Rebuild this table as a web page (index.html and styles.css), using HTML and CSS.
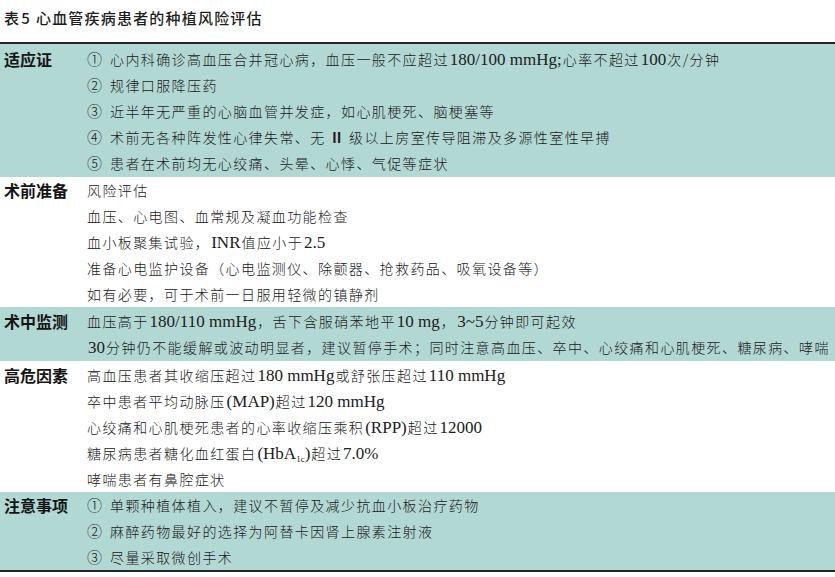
FILE: index.html
```html
<!DOCTYPE html>
<html lang="zh-CN">
<head>
<meta charset="utf-8">
<title>表5 心血管疾病患者的种植风险评估</title>
<link rel="stylesheet" href="styles.css">
</head>
<body>
<div class="page">
  <div class="caption">表<span class="cap-num">5</span>心血管疾病患者的种植风险评估</div>
  <div class="table">
    <div class="sec sec--tint sec--first">
      <div class="label">适应证</div>
      <div class="lines">
        <div class="line"><span class="mark">①</span>心内科确诊高血压合并冠心病，血压一般不应超过<span class="num">180/100 mmHg;</span>心率不超过<span class="num">100</span>次/分钟</div>
        <div class="line"><span class="mark">②</span>规律口服降压药</div>
        <div class="line"><span class="mark">③</span>近半年无严重的心脑血管并发症，如心肌梗死、脑梗塞等</div>
        <div class="line"><span class="mark">④</span>术前无各种阵发性心律失常、无<span class="roman">Ⅱ</span>级以上房室传导阻滞及多源性室性早搏</div>
        <div class="line"><span class="mark">⑤</span>患者在术前均无心绞痛、头晕、心悸、气促等症状</div>
      </div>
    </div>
    <div class="sec">
      <div class="label">术前准备</div>
      <div class="lines">
        <div class="line">风险评估</div>
        <div class="line">血压、心电图、血常规及凝血功能检查</div>
        <div class="line">血小板聚集试验，<span class="num">INR</span>值应小于<span class="num">2.5</span></div>
        <div class="line">准备心电监护设备（心电监测仪、除颤器、抢救药品、吸氧设备等）</div>
        <div class="line">如有必要，可于术前一日服用轻微的镇静剂</div>
      </div>
    </div>
    <div class="sec sec--tint sec--pad">
      <div class="label">术中监测</div>
      <div class="lines">
        <div class="line">血压高于<span class="num">180/110 mmHg</span>，舌下含服硝苯地平<span class="num">10 mg</span>，<span class="num">3~5</span>分钟即可起效</div>
        <div class="line"><span class="num">30</span>分钟仍不能缓解或波动明显者，建议暂停手术；同时注意高血压、卒中、心绞痛和心肌梗死、糖尿病、哮喘</div>
      </div>
    </div>
    <div class="sec sec--top">
      <div class="label">高危因素</div>
      <div class="lines">
        <div class="line">高血压患者其收缩压超过<span class="num">180 mmHg</span>或舒张压超过<span class="num">110 mmHg</span></div>
        <div class="line">卒中患者平均动脉压<span class="num">(MAP)</span>超过<span class="num">120 mmHg</span></div>
        <div class="line">心绞痛和心肌梗死患者的心率收缩压乘积<span class="num">(RPP)</span>超过<span class="num">12000</span></div>
        <div class="line">糖尿病患者糖化血红蛋白<span class="num">(HbA<sub class="sub">1c</sub>)</span>超过<span class="num">7.0%</span></div>
        <div class="line">哮喘患者有鼻腔症状</div>
      </div>
    </div>
    <div class="sec sec--tint">
      <div class="label">注意事项</div>
      <div class="lines">
        <div class="line"><span class="mark">①</span>单颗种植体植入，建议不暂停及减少抗血小板治疗药物</div>
        <div class="line"><span class="mark">②</span>麻醉药物最好的选择为阿替卡因肾上腺素注射液</div>
        <div class="line"><span class="mark">③</span>尽量采取微创手术</div>
      </div>
    </div>
  </div>
</div>
</body>
</html>
```

FILE: styles.css
```css
html, body {
  margin: 0;
  padding: 0;
  background: #ffffff;
}

.page {
  width: 835px;
  height: 577px;
  overflow: hidden;
}

.caption {
  height: 42px;
  box-sizing: border-box;
  padding: 8px 0 0 4px;
  font-family: "Noto Sans CJK SC", sans-serif;
  font-size: 15px;
  font-weight: 500;
  letter-spacing: 1.2px;
  line-height: 20px;
  color: #1e1e1e;
}

.cap-num {
  margin: 0 5px 0 1px;
}

.table {
  border-top: 2px solid #262626;
  border-bottom: 2px solid #262626;
}

.sec {
  display: grid;
  grid-template-columns: 87px 1fr;
  align-items: start;
}

.sec--tint {
  background: #b2d8d3;
}

.sec--first {
  padding: 2px 0 1px;
}

.sec--pad {
  padding: 1px 0 1px;
}

.sec--top {
  padding-top: 1px;
}

.label {
  padding-left: 4px;
  font-family: "Noto Sans CJK SC", sans-serif;
  font-size: 16px;
  font-weight: 700;
  line-height: 26px;
  color: #151515;
}

.lines {
  display: flex;
  flex-direction: column;
}

.line {
  font-family: "Noto Sans CJK SC", sans-serif;
  font-size: 14px;
  font-weight: 300;
  letter-spacing: 1.4px;
  line-height: 26px;
  height: 26px;
  color: #202020;
  white-space: nowrap;
}

.mark {
  display: inline-block;
  font-size: 15px;
  margin-right: 8px;
  letter-spacing: 0;
}

.roman {
  display: inline-block;
  margin: 0 4px;
  font-weight: 700;
}

.num {
  font-family: "Liberation Serif", "Noto Sans CJK SC", serif;
  font-size: 17px;
  font-weight: 400;
  letter-spacing: 0;
  margin: 0 1px;
}

.sub {
  font-size: 9px;
  line-height: 0;
  vertical-align: -3px;
}
```
